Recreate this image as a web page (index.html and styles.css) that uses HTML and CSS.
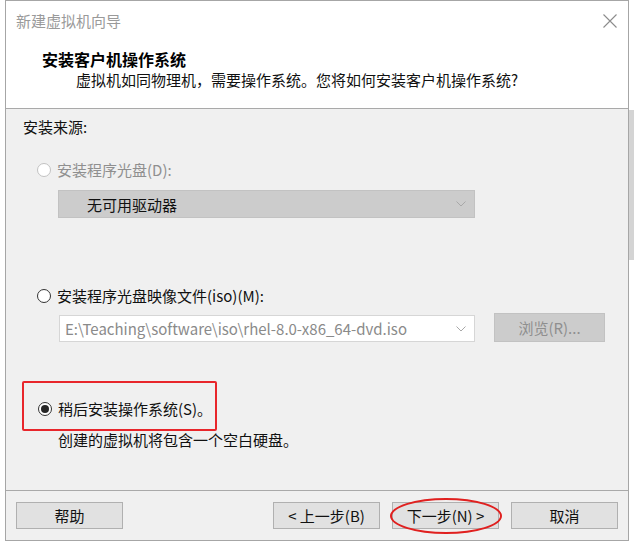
FILE: index.html
```html
<!DOCTYPE html>
<html lang="zh-CN">
<head>
<meta charset="utf-8">
<title>新建虚拟机向导</title>
<link rel="stylesheet" href="styles.css">
</head>
<body>
<div class="page">
  <div class="window">
    <header class="head">
      <div class="titlebar">
        <span class="title">新建虚拟机向导</span>
        <svg class="close" width="14" height="14" viewBox="0 0 14 14" aria-hidden="true">
          <path d="M0.5 0.5 L13.5 13.5 M13.5 0.5 L0.5 13.5" stroke="#8c8c8c" stroke-width="1.1" fill="none"/>
        </svg>
      </div>
      <h1 class="heading">安装客户机操作系统</h1>
      <p class="subtitle">虚拟机如同物理机，需要操作系统。您将如何安装客户机操作系统?</p>
    </header>

    <main class="content">
      <div class="label">安装来源:</div>

      <div class="radio-row row1 is-disabled">
        <span class="radio"></span><span>安装程序光盘(D):</span>
      </div>
      <div class="select select-disabled">
        <span class="select-text">无可用驱动器</span>
        <svg class="chev" width="10" height="6" viewBox="0 0 10 6" aria-hidden="true"><polyline points="0.5,0.5 5,5 9.5,0.5" fill="none" stroke="#a8a8a8" stroke-width="1"/></svg>
      </div>

      <div class="radio-row row2">
        <span class="radio"></span><span>安装程序光盘映像文件(iso)(M):</span>
      </div>
      <div class="iso-row">
        <div class="combo">
          <span class="combo-text">E:\Teaching\software\iso\rhel-8.0-x86_64-dvd.iso</span>
          <svg class="chev" width="10" height="6" viewBox="0 0 10 6" aria-hidden="true"><polyline points="0.5,0.5 5,5 9.5,0.5" fill="none" stroke="#a8a8a8" stroke-width="1"/></svg>
        </div>
        <button class="btn btn-disabled browse">浏览(R)...</button>
      </div>

      <div class="radio-row row3">
        <span class="radio checked"></span><span>稍后安装操作系统(S)。</span>
      </div>
      <p class="note">创建的虚拟机将包含一个空白硬盘。</p>

      <div class="mark-rect"></div>
    </main>

    <footer class="foot">
      <button class="btn">帮助</button>
      <div class="nav">
        <button class="btn">&lt; 上一步(B)</button>
        <button class="btn">下一步(N) &gt;</button>
        <button class="btn">取消</button>
      </div>
      <div class="mark-ellipse"></div>
    </footer>
  </div>
  <div class="side-strip"></div>
</div>
</body>
</html>
```

FILE: styles.css
```css
* { box-sizing: border-box; }

html, body {
  margin: 0;
  padding: 0;
  background: #ffffff;
}

body {
  font-family: "Noto Sans CJK SC", "Noto Sans", sans-serif;
  font-size: 15px;
  color: #111111;
}

.page {
  display: flex;
  align-items: flex-start;
  padding-left: 5px;
  width: 634px;
  height: 546px;
  overflow: hidden;
}

.window {
  width: 624px;
  height: 541px;
  border: 1px solid #a6a6a6;
  background: #f0f0f0;
  display: flex;
  flex-direction: column;
  flex-shrink: 0;
}

.side-strip {
  width: 5px;
  height: 150px;
  margin-top: 110px;
  background: #d4d4d4;
}

/* header */
.head {
  height: 108px;
  background: #ffffff;
  border-bottom: 1px solid #a9a9a9;
  padding-top: 10px;
  flex-shrink: 0;
}

.titlebar {
  display: flex;
  justify-content: space-between;
  align-items: center;
  height: 20px;
  padding: 0 11px 0 10px;
}

.title {
  color: #9a9a9a;
  line-height: 20px;
  font-size: 15px;
}

.close { display: block; }

.heading {
  margin: 17px 0 0 36px;
  font-size: 16px;
  font-weight: 700;
  line-height: 22px;
  color: #000;
}

.subtitle {
  margin: 0 0 0 70px;
  line-height: 20px;
}

/* content */
.content {
  position: relative;
  height: 381px;
  padding-top: 8px;
  flex-shrink: 0;
}

.label {
  margin-left: 17px;
  line-height: 20px;
}

.radio-row {
  display: flex;
  align-items: center;
  gap: 6px;
  margin-left: 31px;
  height: 20px;
  line-height: 20px;
}

.row1 { margin-top: 23px; }
.row2 { margin-top: 68px; }
.row3 { margin-top: 57px; margin-left: 32px; }

.is-disabled { color: #8f8f8f; }

.radio {
  width: 14px;
  height: 14px;
  border-radius: 50%;
  border: 1px solid #333333;
  background: #ffffff;
  display: flex;
  align-items: center;
  justify-content: center;
  flex-shrink: 0;
}

.is-disabled .radio { border-color: #c2c2c2; }

.radio.checked::after {
  content: "";
  width: 8px;
  height: 8px;
  border-radius: 50%;
  background: #262626;
}

.select {
  margin: 10px 0 0 52px;
  width: 417px;
  height: 28px;
  display: flex;
  align-items: center;
  justify-content: space-between;
  padding: 0 8px 0 28px;
}

.select-disabled {
  background: #cccccc;
  border: 1px solid #c2c2c2;
  color: #111;
}

.chev { display: block; }

.iso-row {
  display: flex;
  align-items: flex-end;
  gap: 19px;
  margin: 7px 0 0 53px;
}

.combo {
  width: 416px;
  height: 27px;
  background: #ffffff;
  border: 1px solid #d6d6d6;
  display: flex;
  align-items: center;
  justify-content: space-between;
  padding: 0 8px 0 5px;
}

.combo-text {
  color: #8a8a8a;
  font-size: 15px;
  line-height: 20px;
  white-space: nowrap;
}

.note {
  margin: 11px 0 0 52px;
  line-height: 20px;
}

/* buttons */
.btn {
  font-family: "Noto Sans CJK SC", "Noto Sans", sans-serif;
  font-size: 15px;
  color: #111111;
  width: 107px;
  height: 27px;
  padding: 0;
  line-height: 25px;
  background: #e1e1e1;
  border: 1px solid #b0b0b0;
  border-radius: 0;
}

.btn-disabled {
  background: #cccccc;
  border-color: #c2c2c2;
  color: #8f8f8f;
}

.browse {
  width: 111px;
  height: 29px;
  line-height: 27px;
}

/* footer */
.foot {
  position: relative;
  height: 50px;
  border-top: 1px solid #a9a9a9;
  padding: 11px 10px 0 10px;
  display: flex;
  justify-content: space-between;
  align-items: flex-start;
  flex-shrink: 0;
}

.nav {
  display: flex;
  gap: 12px;
}

/* red annotations */
.mark-rect {
  position: absolute;
  left: 16px;
  top: 272px;
  width: 195px;
  height: 50px;
  border: 2px solid #e8262b;
  border-radius: 2px;
}

.mark-ellipse {
  position: absolute;
  left: 384px;
  top: 7px;
  width: 112px;
  height: 36px;
  border: 2px solid #e0201f;
  border-radius: 50%;
}
```
